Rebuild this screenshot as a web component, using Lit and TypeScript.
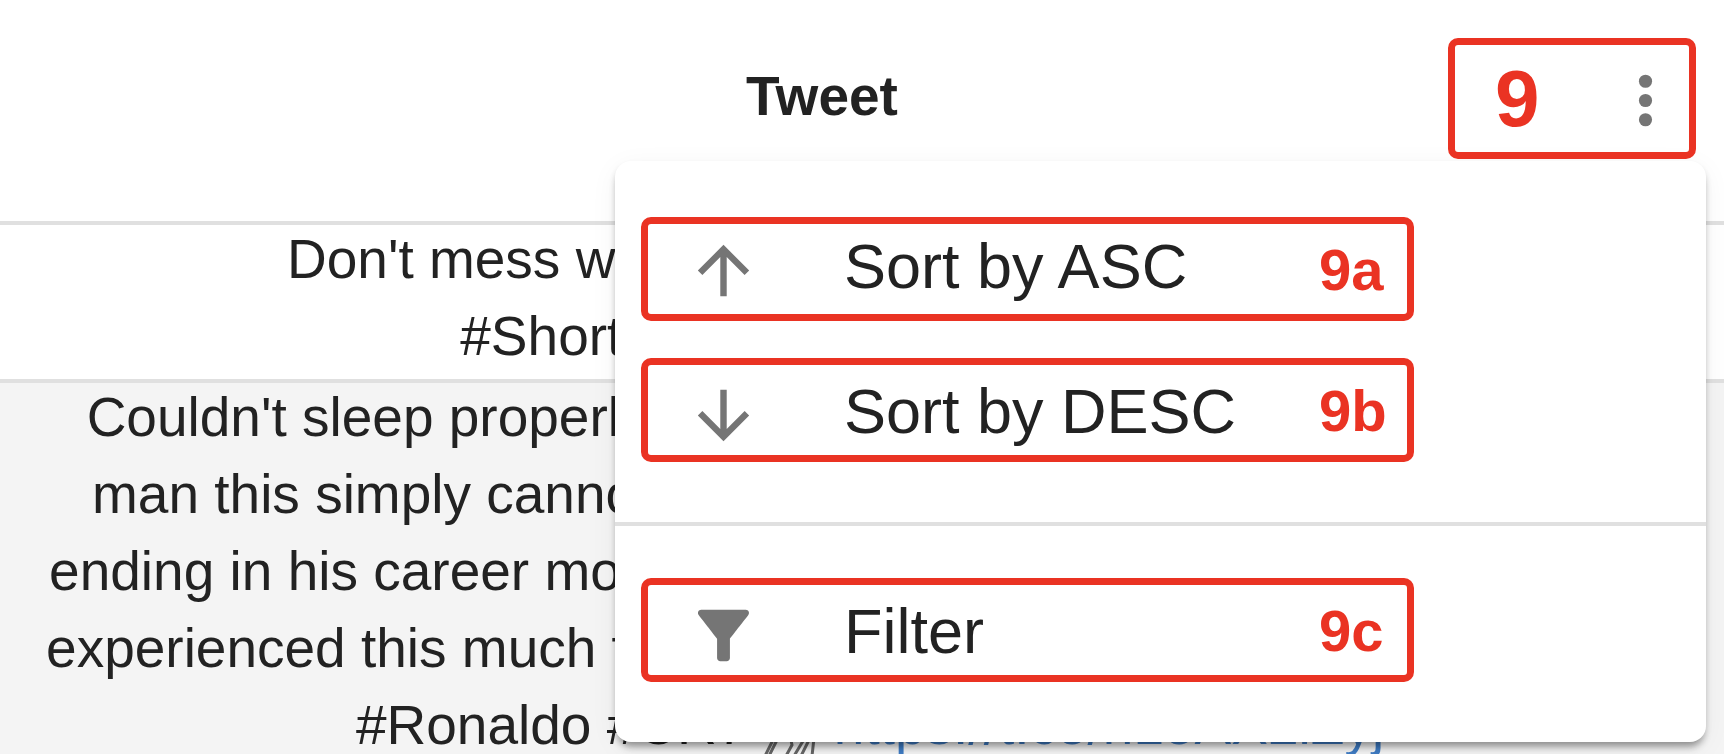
import { LitElement, html, css, svg } from "lit";
import { customElement } from "lit/decorators.js";

const arrowUp = svg`<path d="M4 12l1.41 1.41L11 7.83V20h2V7.83l5.58 5.59L20 12l-8-8-8 8z"/>`;
const arrowDown = svg`<path d="M20 12l-1.41-1.41L13 16.17V4h-2v12.17l-5.58-5.59L4 12l8 8 8-8z"/>`;
const funnel = svg`<path d="M4.25 5.61C6.27 8.2 10 13 10 13v6c0 .55.45 1 1 1h2c.55 0 1-.45 1-1v-6s3.72-4.8 5.74-7.39c.51-.66.04-1.61-.79-1.61H5.04c-.83 0-1.3.95-.79 1.61z"/>`;
const moreVert = svg`<circle cx="12" cy="6" r="2.05"/><circle cx="12" cy="12" r="2.05"/><circle cx="12" cy="18" r="2.05"/>`;

@customElement("app-root")
export class AppRoot extends LitElement {
  static styles = css`
    :host {
      display: block;
      position: relative;
      height: 100vh;
      overflow: hidden;
      background: #fff;
      color: #222;
      font-family: "Liberation Sans", Arial, Helvetica, sans-serif;
    }
    .grid {
      width: 100%;
      table-layout: fixed;
      border-collapse: separate;
      border-spacing: 0;
      font-size: 55px;
      line-height: 77px;
    }
    .cell {
      padding: 0 0 0 16px;
      border-bottom: 4px solid #e0e0e0;
      text-align: center;
      white-space: nowrap;
    }
    .even {
      background: #f4f4f4;
    }
    .head {
      display: flex;
      padding: 62px 40px 82px 21px;
    }
    .title,
    .tweet {
      margin: -4px 0 4px;
    }
    .title {
      flex: 1;
      font-weight: bold;
    }
    .icon-button {
      display: flex;
      padding: 0;
      border: 0;
      background: none;
      cursor: pointer;
    }
    .icon {
      display: block;
      width: 77px;
      height: 77px;
      fill: #757575;
    }
    .link {
      color: #3f7cc4;
      text-decoration: none;
    }
    .goat {
      width: 56px;
      height: 62px;
      vertical-align: -14px;
      fill: none;
      stroke: #666;
      stroke-width: 3;
    }
    .menu {
      position: absolute;
      top: 161px;
      right: 18px;
      width: 1091px;
      border-radius: 16px;
      background: #fff;
      box-shadow:
        0 8px 8px -4px rgba(0, 0, 0, 0.34),
        0 4px 6px rgba(0, 0, 0, 0.12),
        0 6px 28px rgba(0, 0, 0, 0.05);
    }
    .group {
      margin: 0;
      padding: 32px 0 39px;
      list-style: none;
    }
    .group + .group {
      border-top: 4px solid #e0e0e0;
    }
    .item {
      display: flex;
      align-items: center;
      gap: 82px;
      width: 100%;
      height: 145px;
      padding: 0 70px;
      border: 0;
      background: none;
      color: inherit;
      font: inherit;
      font-size: 63px;
      text-align: left;
      cursor: pointer;
    }
    .item .icon {
      margin-top: 10px;
    }
    .callout {
      position: absolute;
      box-sizing: border-box;
      display: flex;
      align-items: center;
      border: 7px solid #ea3323;
      border-radius: 10px;
      color: #ea3323;
      font-weight: bold;
      pointer-events: none;
    }
    .callout.trigger {
      top: 38px;
      right: 28px;
      width: 248px;
      height: 121px;
      padding-left: 40px;
      font-size: 80px;
    }
    .callout.option {
      left: 26px;
      width: 773px;
      height: 104px;
      padding-left: 671px;
      font-size: 58px;
    }
    .option.asc {
      top: 56px;
    }
    .option.desc {
      top: 197px;
    }
    .option.filter {
      top: 417px;
    }
  `;

  private item(icon: unknown, label: string) {
    return html`<li>
      <button class="item" type="button">
        <svg class="icon" viewBox="0 0 24 24" aria-hidden="true">${icon}</svg>
        <span>${label}</span>
      </button>
    </li>`;
  }

  render() {
    return html`
      <table class="grid">
        <thead>
          <tr>
            <th class="cell" scope="col">
              <div class="head">
                <div class="title">Tweet</div>
                <button class="icon-button" type="button" aria-label="Column menu">
                  <svg class="icon" viewBox="0 0 24 24" aria-hidden="true">${moreVert}</svg>
                </button>
              </div>
            </th>
          </tr>
        </thead>
        <tbody>
          <tr>
            <td class="cell">
              <div class="tweet">
                Don't mess with the greatest of all time in sports<br />
                #Shorts #Ronaldo #football #CR7
              </div>
            </td>
          </tr>
          <tr>
            <td class="cell even">
              <div class="tweet">
                Couldn't sleep properly thinking about last night after that match,<br />
                man this simply cannot be the way it goes, this is not the correct<br />
                ending in his career more than ever here, because I have still never<br />
                experienced this much tension and heartbreak watching us play live<br />
                #Ronaldo #CR7
                <svg class="goat" viewBox="0 0 56 62" aria-hidden="true">
                  <path d="M14 12c8-6 14 2 16 12l16 2c6 4 6 10 4 18M14 12l-8 10 8 4 4 14" />
                  <path d="M16 40L6 60M12 40L2 60M27 40l2 9-6 11M43 40L31 60M48 40L38 60M51 42l-2 18" />
                </svg>
                <a class="link" href="https://t.co/n1oAX2iZyj">https://t.co/n1oAX2iZyj</a>
              </div>
            </td>
          </tr>
        </tbody>
      </table>

      <div class="menu">
        <ul class="group">
          ${this.item(arrowUp, "Sort by ASC")} ${this.item(arrowDown, "Sort by DESC")}
        </ul>
        <ul class="group">
          ${this.item(funnel, "Filter")}
        </ul>
        <div class="callout option asc">9a</div>
        <div class="callout option desc">9b</div>
        <div class="callout option filter">9c</div>
      </div>
      <div class="callout trigger">9</div>
    `;
  }
}
